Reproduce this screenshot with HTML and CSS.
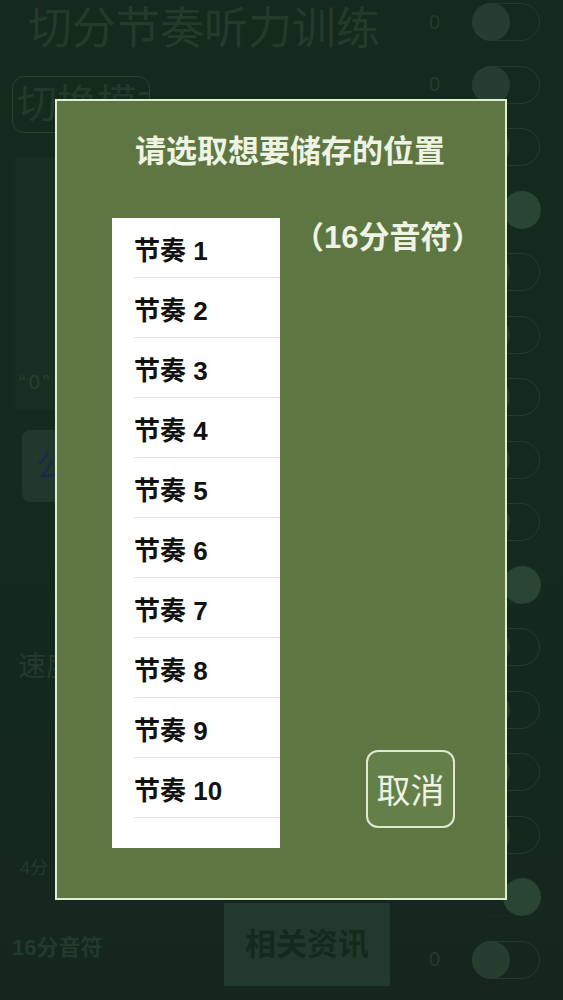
FILE: index.html
```html
<!DOCTYPE html>
<html lang="zh-CN">
<head>
    <meta charset="UTF-8">
    <meta name="viewport" content="width=device-width, initial-scale=1.0">
    <title>切分节奏听力训练</title>
    <link rel="stylesheet" href="styles.css">
</head>
<body>

<div class="app">
    <!-- Colonne principale (sous le dialogue) -->
    <div class="main">
        <h1 class="app-title">切分节奏听力训练</h1>
        <div class="mode-button">切换模式</div>

        <div class="score-panel">
            <span class="score-text">“0”</span>
        </div>

        <div class="key-row">
            <div class="key-button">公</div>
        </div>

        <div class="speed-label">速度</div>

        <div class="bottom-area">
            <div class="note-labels">
                <span class="note-small">4分</span>
                <span class="note-big">16分音符</span>
            </div>
            <div class="info-button">相关资讯</div>
        </div>
    </div>

    <!-- Interrupteurs à droite -->
    <div class="switches" id="switches"></div>
</div>

<!-- Dialogue de sauvegarde -->
<div class="save-dialog">
    <div class="dialog-title">请选取想要储存的位置</div>
    <div class="dialog-body">
        <ul class="slot-list" id="slotList"></ul>
        <div class="dialog-side">
            <div class="note-kind">（16分音符）</div>
            <button class="cancel-button">取消</button>
        </div>
    </div>
</div>

<script>
    const slotList = document.getElementById('slotList');
    for (let i = 1; i <= 10; i++) {
        const li = document.createElement('li');
        li.className = 'slot';
        li.innerHTML = '<span class="slot-inner">节奏 ' + i + '</span>';
        slotList.appendChild(li);
    }

    // 16 interrupteurs, certains activés ; la valeur n'est visible que hors du dialogue
    const switches = document.getElementById('switches');
    const onRows = [4, 10, 15];
    const shownValues = [1, 2, 16];
    for (let i = 1; i <= 16; i++) {
        const row = document.createElement('div');
        row.className = 'switch-row';
        const on = onRows.includes(i);
        const value = shownValues.includes(i) ? '0' : '';
        row.innerHTML = '<span class="switch-value">' + value + '</span>' +
            '<span class="switch' + (on ? ' is-on' : '') + '"><span class="knob"></span></span>';
        switches.appendChild(row);
    }
</script>

</body>
</html>
```

FILE: styles.css
```css
* {
    margin: 0;
    padding: 0;
    box-sizing: border-box;
}
body {
    font-family: 'Liberation Sans', 'Noto Sans CJK SC', sans-serif;
    background: linear-gradient(180deg, #132a1c 0%, #132a1d 55%, #16261e 100%);
    width: 563px;
    height: 1000px;
    overflow: hidden;
}
.app {
    display: flex;
    height: 1000px;
}

/* Colonne principale */
.main {
    width: 420px;
    display: flex;
    flex-direction: column;
}
.app-title {
    font-size: 44px;
    font-weight: normal;
    line-height: 56px;
    color: #243b2c;
    margin: 1px 0 0 28px;
    white-space: nowrap;
}
.mode-button {
    width: 138px;
    height: 57px;
    margin: 19px 0 0 12px;
    border: 1.5px solid #294131;
    border-radius: 12px;
    font-size: 40px;
    line-height: 54px;
    color: #223a2b;
    padding-left: 4px;
    overflow: hidden;
    white-space: nowrap;
}
.score-panel {
    height: 253px;
    margin: 24px 0 0 15px;
    background: #172f20;
    display: flex;
    align-items: flex-end;
    padding: 0 0 16px 4px;
}
.score-text {
    font-size: 20px;
    color: #28402f;
    letter-spacing: 3px;
}
.key-row {
    margin: 20px 0 0 22px;
}
.key-button {
    width: 150px;
    height: 72px;
    background: #21392d;
    border-radius: 8px;
    font-size: 32px;
    line-height: 72px;
    padding-left: 14px;
    color: #1b2b46;
    white-space: nowrap;
}
.speed-label {
    margin: 142px 0 0 18px;
    font-size: 28px;
    color: #26392c;
}
.bottom-area {
    display: flex;
    margin-top: 169px;
}
.note-labels {
    width: 224px;
    display: flex;
    flex-direction: column;
}
.note-small {
    font-size: 18px;
    color: #243a2c;
    margin: 0 0 0 20px;
}
.note-big {
    font-size: 22px;
    font-weight: bold;
    color: #233a2b;
    margin: 50px 0 0 12px;
}
.info-button {
    width: 166px;
    height: 83px;
    margin-top: 50px;
    background: #223a2e;
    font-size: 31px;
    font-weight: bold;
    line-height: 83px;
    text-align: center;
    color: #132a1d;
    flex-shrink: 0;
}

/* Interrupteurs */
.switches {
    flex: 1;
    display: flex;
    flex-direction: column;
    margin-top: -9px;
}
.switch-row {
    height: 62.5px;
    display: flex;
    align-items: center;
    flex-shrink: 0;
}
.switch-value {
    width: 52px;
    padding-left: 9px;
    font-size: 20px;
    color: #253a2c;
}
.switch {
    width: 68px;
    height: 38px;
    border: 1.5px solid #26392d;
    border-radius: 19px;
    display: flex;
    align-items: center;
}
.knob {
    width: 38px;
    height: 38px;
    margin-left: -1.5px;
    border-radius: 50%;
    background: #263d30;
}
.switch.is-on {
    justify-content: flex-end;
    border-color: #1a2c22;
}
.switch.is-on .knob {
    margin: 0 -1.5px 0 0;
    background: #2a4533;
}

/* Dialogue */
.save-dialog {
    position: fixed;
    left: 55px;
    top: 99px;
    width: 452px;
    height: 801px;
    border: 2px solid #e3ecd5;
    background: #5e7642;
    color: #eef3e4;
    padding-top: 31px;
}
.dialog-title {
    font-size: 31px;
    font-weight: bold;
    line-height: 40px;
    padding-left: 78px;
    white-space: nowrap;
}
.dialog-body {
    display: flex;
    margin-top: 46px;
    height: 630px;
}
.slot-list {
    list-style: none;
    width: 168px;
    height: 630px;
    margin-left: 55px;
    background: #fff;
}
.slot {
    height: 60px;
    padding-left: 22px;
}
.slot-inner {
    display: flex;
    align-items: center;
    height: 60px;
    border-bottom: 1px solid #e2e2e2;
    font-size: 26px;
    font-weight: bold;
    color: #111;
    padding-top: 2px;
}
.dialog-side {
    flex: 1;
    display: flex;
    flex-direction: column;
    align-items: flex-start;
}
.note-kind {
    font-size: 31px;
    font-weight: bold;
    line-height: 40px;
    margin-left: 13px;
    white-space: nowrap;
}
.cancel-button {
    margin: auto 0 20px 86px;
    width: 89px;
    height: 78px;
    border: 2px solid #dfe9cf;
    border-radius: 12px;
    background: #657f49;
    color: #eef3e6;
    font-family: 'Noto Sans CJK SC', sans-serif;
    font-size: 34px;
    line-height: 1;
}
```
